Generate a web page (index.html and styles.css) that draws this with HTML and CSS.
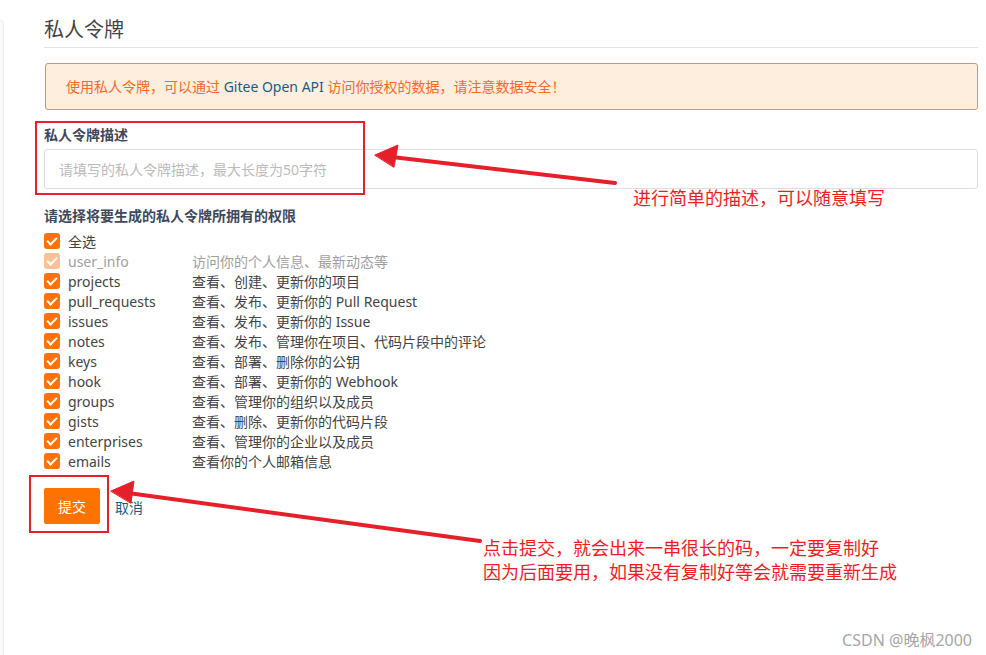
FILE: index.html
```html
<!DOCTYPE html>
<html lang="zh-CN">
<head>
    <meta charset="UTF-8">
    <meta name="viewport" content="width=device-width, initial-scale=1.0">
    <title>私人令牌</title>
    <link rel="stylesheet" href="styles.css">
</head>
<body>
    <div class="page">
        <aside class="side"></aside>
        <main class="content">
            <h2 class="title">私人令牌</h2>
            <div class="alert">
                使用私人令牌，可以通过 <span class="alert-link">Gitee Open API</span> 访问你授权的数据，请注意数据安全！
            </div>
            <form class="token-form">
                <div class="field">
                    <label for="desc">私人令牌描述</label>
                    <input type="text" id="desc" placeholder="请填写的私人令牌描述，最大长度为50字符">
                </div>
                <div class="scopes">
                    <div class="scopes-label">请选择将要生成的私人令牌所拥有的权限</div>
                    <ul class="scope-list">
                        <li><span class="check"></span><span class="name">全选</span></li>
                        <li class="disabled"><span class="check"></span><span class="name">user_info</span><span class="desc">访问你的个人信息、最新动态等</span></li>
                        <li><span class="check"></span><span class="name">projects</span><span class="desc">查看、创建、更新你的项目</span></li>
                        <li><span class="check"></span><span class="name">pull_requests</span><span class="desc">查看、发布、更新你的 Pull Request</span></li>
                        <li><span class="check"></span><span class="name">issues</span><span class="desc">查看、发布、更新你的 Issue</span></li>
                        <li><span class="check"></span><span class="name">notes</span><span class="desc">查看、发布、管理你在项目、代码片段中的评论</span></li>
                        <li><span class="check"></span><span class="name">keys</span><span class="desc">查看、部署、删除你的公钥</span></li>
                        <li><span class="check"></span><span class="name">hook</span><span class="desc">查看、部署、更新你的 Webhook</span></li>
                        <li><span class="check"></span><span class="name">groups</span><span class="desc">查看、管理你的组织以及成员</span></li>
                        <li><span class="check"></span><span class="name">gists</span><span class="desc">查看、删除、更新你的代码片段</span></li>
                        <li><span class="check"></span><span class="name">enterprises</span><span class="desc">查看、管理你的企业以及成员</span></li>
                        <li><span class="check"></span><span class="name">emails</span><span class="desc">查看你的个人邮箱信息</span></li>
                    </ul>
                </div>
                <div class="actions">
                    <button type="button" class="submit">提交</button>
                    <a href="#" class="cancel">取消</a>
                </div>
            </form>
        </main>
    </div>

    <!-- annotations drawn over the screenshot -->
    <div class="mark mark-desc"></div>
    <div class="mark mark-submit"></div>
    <svg class="arrows" width="986" height="655" viewBox="0 0 986 655">
        <g fill="#e6202a" stroke="#e6202a" stroke-width="4" stroke-linecap="round">
            <line x1="615" y1="183" x2="392" y2="157"/>
            <polygon stroke-width="1" points="375,155 398,145 394,167"/>
            <line x1="480" y1="541" x2="128" y2="493"/>
            <polygon stroke-width="1" points="111,491 134,481 131,503"/>
        </g>
    </svg>
    <div class="note note-desc">进行简单的描述，可以随意填写</div>
    <div class="note note-submit">点击提交，就会出来一串很长的码，一定要复制好<br>因为后面要用，如果没有复制好等会就需要重新生成</div>
    <div class="watermark">CSDN @晚枫2000</div>
</body>
</html>
```

FILE: styles.css
```css
body {
    margin: 0;
    font-family: "Noto Sans", "Noto Sans CJK SC", sans-serif;
    color: #333;
    background: #fff;
    width: 986px;
    height: 655px;
    overflow: hidden;
    position: relative;
}
.page {
    display: flex;
    align-items: flex-start;
}
.side {
    width: 3px;
    height: 640px;
    margin-top: 20px;
    background: #fafafa;
    border: 1px solid #ebebeb;
    border-left: none;
    border-top-right-radius: 4px;
}
.content {
    margin-left: 40px;
    width: 934px;
    padding-top: 16px;
}
.title {
    margin: 0;
    font-size: 20px;
    font-weight: normal;
    line-height: 28px;
    padding-bottom: 3px;
    color: #444;
    border-bottom: 1px solid #e3e3e3;
}
.alert {
    margin: 15px 0 0 1px;
    padding: 13px 20px;
    font-size: 14px;
    line-height: 19px;
    color: #f5692c;
    background: #feeede;
    border: 1px solid #f98a3c;
    border-radius: 3px;
}
.alert-link {
    color: #1a5d82;
}
.field {
    margin-top: 15px;
}
.field label {
    display: block;
    font-size: 14px;
    font-weight: bold;
    line-height: 20px;
    margin-bottom: 4px;
    color: #40485b;
}
.field input {
    display: block;
    box-sizing: border-box;
    width: 100%;
    height: 40px;
    padding: 0 14px;
    font-family: inherit;
    font-size: 14px;
    border: 1px solid #dedede;
    border-radius: 3px;
    outline: none;
}
.field input::placeholder {
    color: #bbb;
}
.scopes {
    margin-top: 17px;
}
.scopes-label {
    font-size: 14px;
    font-weight: bold;
    line-height: 20px;
    color: #40485b;
}
.scope-list {
    list-style: none;
    margin: 5px 0 0;
    padding: 0;
}
.scope-list li {
    display: flex;
    align-items: center;
    height: 20px;
    font-size: 14px;
    color: #444;
}
.check {
    position: relative;
    width: 16px;
    height: 16px;
    background: #fe7300;
    border-radius: 3px;
    margin-right: 8px;
    flex: none;
}
.check::after {
    content: "";
    position: absolute;
    left: 5px;
    top: 2px;
    width: 4px;
    height: 8px;
    border: solid #fff;
    border-width: 0 2px 2px 0;
    transform: rotate(45deg);
}
.name {
    width: 124px;
}
.disabled {
    color: #a0a0a0 !important;
}
.disabled .check {
    background: #fdc195;
}
.actions {
    margin-top: 17px;
    display: flex;
    align-items: center;
}
.submit {
    width: 56px;
    height: 36px;
    background: #fe7300;
    color: #fff;
    border: none;
    border-radius: 2px;
    font-family: inherit;
    font-size: 14px;
    cursor: pointer;
}
.cancel {
    margin-left: 15px;
    margin-top: 1px;
    font-size: 14px;
    color: #1a5d82;
    text-decoration: none;
}
.mark {
    position: absolute;
    border: 2px solid #e6202a;
}
.mark-desc {
    left: 35px;
    top: 121px;
    width: 326px;
    height: 70px;
}
.mark-submit {
    left: 29px;
    top: 475px;
    width: 76px;
    height: 54px;
}
.arrows {
    position: absolute;
    left: 0;
    top: 0;
}
.note {
    position: absolute;
    font-size: 18px;
    line-height: 24px;
    color: #ee1c25;
}
.note-desc {
    left: 633px;
    top: 186px;
}
.note-submit {
    left: 483px;
    top: 536px;
}
.watermark {
    position: absolute;
    right: 14px;
    top: 627px;
    font-size: 16px;
    color: #a6a6a6;
}
```
